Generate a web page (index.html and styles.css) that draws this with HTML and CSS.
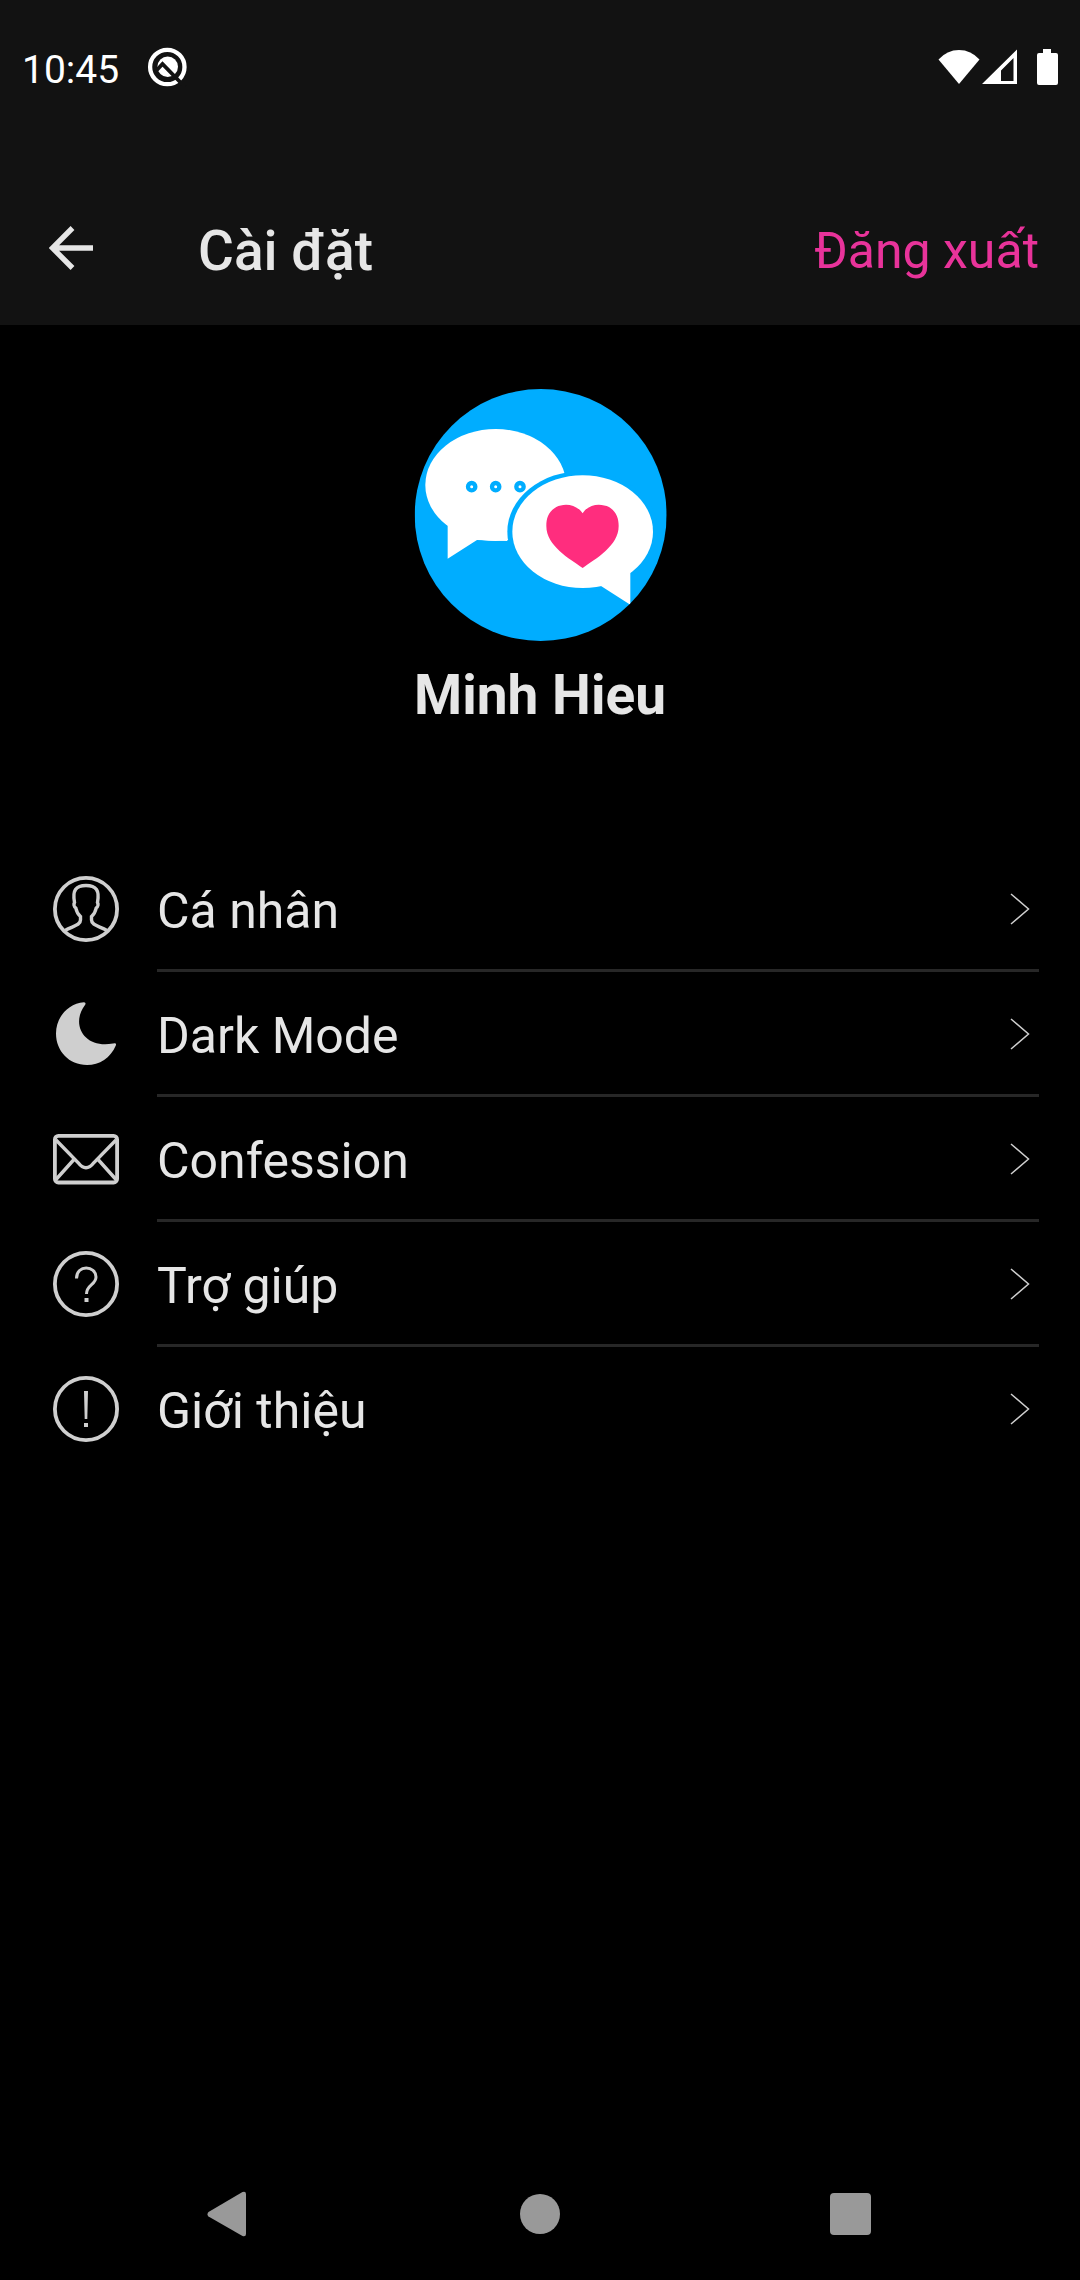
FILE: index.html
```html
<!DOCTYPE html>
<html lang="vi">
<head>
<meta charset="utf-8">
<meta name="viewport" content="width=device-width, initial-scale=1">
<title>Cài đặt</title>
<link rel="stylesheet" href="styles.css">
</head>
<body>
<header class="header">
  <div class="status">
    <time class="clock">10:45</time>
    <svg class="status-app" width="40" height="40" viewBox="0 0 40 40" aria-hidden="true">
      <circle cx="20.300" cy="20" r="17.200" fill="none" stroke="#fff" stroke-width="4.300"/>
      <circle cx="20.700" cy="19.800" r="10.300" fill="#fff"/>
      <path d="M8 25L15.500 17L38 40" fill="none" stroke="#121212" stroke-width="3.800"/>
    </svg>
    <div class="status-icons">
      <svg width="42" height="36" viewBox="0 0 42 36" aria-hidden="true"><path d="M0.500 10.500Q9 1 21 1T41.500 10.500L21 35Z" fill="#fff"/></svg>
      <svg width="36" height="36" viewBox="0 0 36 36" aria-hidden="true"><path d="M0 35L35 0.500V35ZM19 21.500V32H31.500V9Z" fill="#fff" fill-rule="evenodd"/></svg>
      <svg class="battery" width="22" height="36" viewBox="0 0 22 36" aria-hidden="true"><path d="M7 0h8v4h5a2 2 0 0 1 2 2v28a2 2 0 0 1-2 2H3a2 2 0 0 1-2-2V6a2 2 0 0 1 2-2h4Z" fill="#fff"/></svg>
    </div>
  </div>
  <div class="toolbar">
    <button class="back" type="button" aria-label="Quay lại">
      <svg width="44" height="44" viewBox="0 0 44 44" aria-hidden="true"><path d="M23.500 2L3.500 22L23.500 42M4 22H44" fill="none" stroke="#e6e6e6" stroke-width="5.400"/></svg>
    </button>
    <h1 class="title">Cài đặt</h1>
    <button class="logout" type="button">Đăng xuất</button>
  </div>
</header>

<main class="content">
  <section class="profile">
    <svg class="avatar" viewBox="43 57 756 756" role="img" aria-label="Minh Hieu">
      <defs><clipPath id="round"><circle cx="423" cy="435" r="378"/></clipPath></defs>
      <g clip-path="url(#round)">
        <rect x="45" y="57" width="756" height="756" fill="#00adff"/>
        <ellipse cx="288" cy="345" rx="211" ry="168" fill="#fff"/>
        <path d="M144 455V566L232 510L323 513V440Z" fill="#fff"/>
        <g fill="#fff" stroke="#00adff" stroke-width="13">
          <circle cx="216" cy="350" r="11"/><circle cx="288" cy="350" r="11"/><circle cx="361" cy="350" r="11"/>
        </g>
        <ellipse cx="549" cy="485" rx="226" ry="182" fill="#00adff"/>
        <ellipse cx="549" cy="485" rx="211" ry="169" fill="#fff"/>
        <path d="M692 590V704L604 648L620 600Z" fill="#fff"/>
        <path d="M549 430C528 399 490 400 470 411C446 425 440 444 440 468C440 528 510 566 549 594C588 566 657 528 657 468C657 444 650 425 628 411C606 400 568 399 549 430Z" fill="#ff2d7e"/>
      </g>
    </svg>
    <h2 class="name">Minh Hieu</h2>
  </section>

  <nav aria-label="Cài đặt">
    <ul class="menu">
      <li><a class="item" href="#profile">
        <svg class="icon" viewBox="0 0 66 66" aria-hidden="true"><g fill="none" stroke="#cfcfcf" stroke-width="3.800"><circle cx="33" cy="33" r="31.100"/><path stroke-width="3.400" d="M12 54.500C20 50 27.500 49.500 27.500 44V40.500C24.500 38 23.500 35.500 22.800 32C20.800 30.500 20.500 28 21.500 26.500C20.500 21 20.500 16.500 22.500 13.500C25 10 29 9.500 33 9.500C37 9.500 41 10 43.500 13.500C45.500 16.500 45.500 21 44.500 26.500C45.500 28 45.200 30.500 43.200 32C42.500 35.500 41.500 38 38.500 40.500V44C38.500 49.500 46 50 54 54.500"/></g></svg>
        <span class="label">Cá nhân<svg class="chevron" viewBox="0 0 20 32" aria-hidden="true"><path d="M1 1L18.500 16L1 31"/></svg></span>
      </a></li>
      <li><a class="item" href="#dark-mode">
        <svg class="icon" viewBox="0 0 66 66" aria-hidden="true"><path d="M31 1.200Q33.500 1.500 32 4C17 24 32 48 60 42.500Q64 41.500 62.800 44.500C57.500 57 46.500 64 34 64C16 64 3 50 3 32.500C3 16 15 2.500 31 1.200Z" fill="#cfcfcf"/></svg>
        <span class="label">Dark Mode<svg class="chevron" viewBox="0 0 20 32" aria-hidden="true"><path d="M1 1L18.500 16L1 31"/></svg></span>
      </a></li>
      <li><a class="item" href="#confession">
        <svg class="icon" viewBox="0 0 66 66" aria-hidden="true"><g fill="none" stroke="#cfcfcf" stroke-width="3.800"><rect x="1.900" y="9.900" width="62.200" height="46.600" rx="3.500"/><path stroke-width="3.400" d="M3 14L25 36.500Q33 47 41 36.500L63 14M3 53.500L20.500 34M63 53.500L45.500 34"/></g></svg>
        <span class="label">Confession<svg class="chevron" viewBox="0 0 20 32" aria-hidden="true"><path d="M1 1L18.500 16L1 31"/></svg></span>
      </a></li>
      <li><a class="item" href="#help">
        <svg class="icon" viewBox="0 0 66 66" aria-hidden="true"><circle cx="33" cy="33" r="31.100" fill="none" stroke="#cfcfcf" stroke-width="3.800"/><path d="M23.500 27.500C23.500 13 43 14.500 43 26C43 34 33.500 33.500 33.500 43" fill="none" stroke="#cfcfcf" stroke-width="3"/><rect x="31.500" y="47" width="4" height="4" fill="#cfcfcf"/></svg>
        <span class="label">Trợ giúp<svg class="chevron" viewBox="0 0 20 32" aria-hidden="true"><path d="M1 1L18.500 16L1 31"/></svg></span>
      </a></li>
      <li><a class="item" href="#about">
        <svg class="icon" viewBox="0 0 66 66" aria-hidden="true"><circle cx="33" cy="33" r="31.100" fill="none" stroke="#cfcfcf" stroke-width="3.800"/><path d="M31 15H35L34.300 43H31.700ZM31 47H35V51H31Z" fill="#cfcfcf"/></svg>
        <span class="label">Giới thiệu<svg class="chevron" viewBox="0 0 20 32" aria-hidden="true"><path d="M1 1L18.500 16L1 31"/></svg></span>
      </a></li>
    </ul>
  </nav>
</main>

<footer class="system-nav">
  <button type="button" aria-label="Trở về"><svg width="40" height="46" viewBox="0 0 40 46" aria-hidden="true"><path d="M1.500 21L35.500 1Q39 0 39 3V43Q39 46 35.500 45L1.500 25.500Q-0.500 23 1.500 21Z" fill="#999"/></svg></button>
  <button type="button" aria-label="Màn hình chính"><svg width="40" height="40" viewBox="0 0 40 40" aria-hidden="true"><circle cx="20" cy="20" r="20" fill="#999"/></svg></button>
  <button type="button" aria-label="Gần đây"><svg width="46" height="42" viewBox="0 0 46 42" aria-hidden="true"><rect x="0" y="0" width="41" height="42" rx="4" fill="#999"/></svg></button>
</footer>
</body>
</html>
```
FILE: styles.css
```css
* {
  box-sizing: border-box;
}

body {
  margin: 0;
  min-height: 100vh;
  display: flex;
  flex-direction: column;
  background: #000;
  color: #e6e6e6;
  font-family: Roboto, "Noto Sans", sans-serif;
  font-size: 50px;
  line-height: 58px;
}

button {
  padding: 0;
  border: 0;
  background: none;
  color: inherit;
  font: inherit;
}

svg {
  display: block;
  flex: none;
}

.header {
  background: #121212;
}

.status {
  display: flex;
  align-items: center;
  height: 134px;
  padding: 0 22px;
  color: #fff;
}

.clock {
  padding-top: 5px;
  font-size: 39px;
}

.status-app {
  margin-left: 28px;
}

.status-icons {
  display: flex;
  gap: 2px;
  margin-left: auto;
}

.battery {
  margin-left: 16px;
}

.toolbar {
  display: flex;
  align-items: center;
  height: 154px;
  margin-top: 37px;
  padding: 0 41px 0 49px;
}

.title {
  margin: 0 auto 0 105px;
  padding-top: 6px;
  font-size: 55px;
  font-weight: 500;
  line-height: 64px;
}

.logout {
  padding-top: 6px;
  color: #e8339a;
}

.content {
  flex: 1;
}

.profile {
  display: flex;
  flex-direction: column;
  align-items: center;
  gap: 22px;
  padding: 64px 0 120px;
}

.avatar {
  width: 252px;
  height: 252px;
  overflow: visible;
}

.name {
  margin: 0;
  font-size: 55px;
  font-weight: 700;
  line-height: 64px;
}

.menu {
  margin: 0;
  padding: 0 41px 0 53px;
  list-style: none;
}

.item {
  display: flex;
  align-items: center;
  gap: 38px;
  color: inherit;
  text-decoration: none;
}

.icon {
  width: 66px;
  height: 66px;
  margin-bottom: 2px;
}

.label {
  flex: 1;
  display: flex;
  align-items: center;
  justify-content: space-between;
  height: 125px;
  padding: 5px 9px 0 0;
  border-bottom: 3px solid #272727;
}

.menu li:last-child .label {
  border-bottom-color: transparent;
}

.chevron {
  width: 20px;
  height: 32px;
  margin-bottom: 4px;
  fill: none;
  stroke: #cfcfcf;
  stroke-width: 1.5px;
}

.system-nav {
  display: grid;
  grid-template-columns: repeat(3, 1fr);
  height: 132px;
  padding: 0 70px;
}

.system-nav button {
  display: flex;
  align-items: center;
  justify-content: center;
}
```
